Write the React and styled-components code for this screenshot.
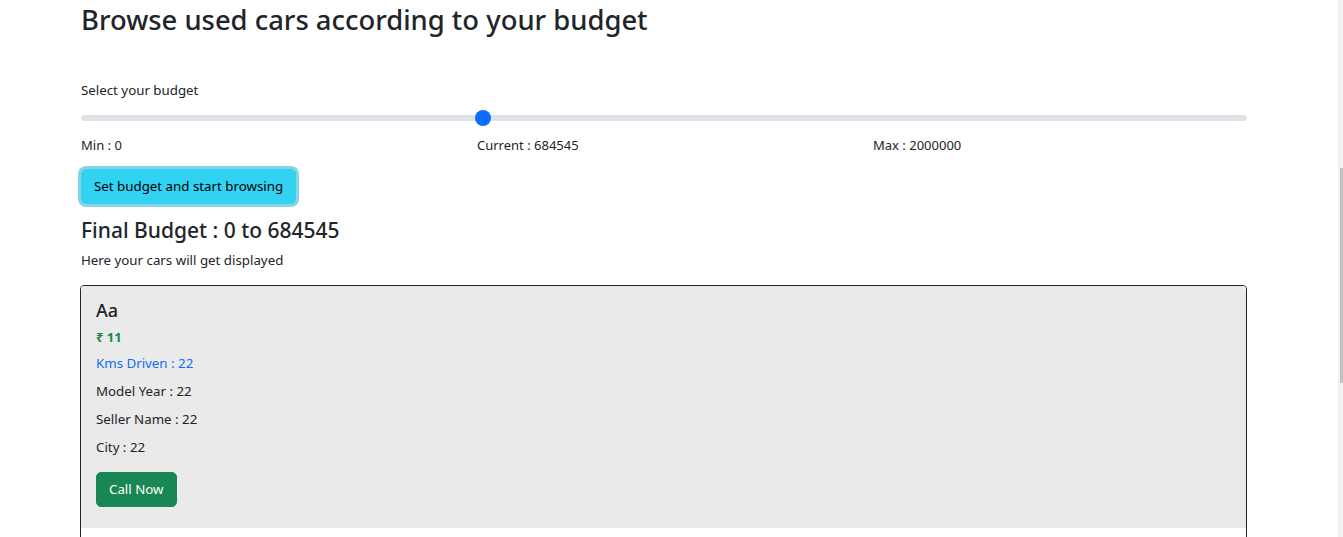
import React, { useState } from 'react';
import styled, { createGlobalStyle } from 'styled-components';

const GlobalStyle = createGlobalStyle`
  html, body {
    margin: 0;
    padding: 0;
    overflow: hidden;
    background: #fff;
  }
  body {
    font-family: "Noto Sans", "Open Sans", Arial, sans-serif;
    color: #212529;
  }
`;

const Page = styled.div`
  width: 1166px;
  margin-left: 81px;
  display: flex;
  flex-direction: column;
`;

const Title = styled.h2`
  margin: 2px 0 0;
  font-size: 27.4px;
  font-weight: 500;
  line-height: 36px;
`;

const Label = styled.div`
  margin-top: ${(p) => p.top || 0}px;
  font-size: 13.3px;
  line-height: 20px;
`;

const Range = styled.input`
  -webkit-appearance: none;
  appearance: none;
  width: 100%;
  height: 24px;
  margin: 6px 0 0;
  padding: 0;
  background: transparent;
  &:focus {
    outline: none;
  }
  &::-webkit-slider-runnable-track {
    height: 6px;
    background: #dee2e6;
    border-radius: 16px;
  }
  &::-webkit-slider-thumb {
    -webkit-appearance: none;
    width: 16px;
    height: 16px;
    margin-top: -5px;
    border-radius: 50%;
    background: #0d6efd;
    border: 0;
  }
`;

const Limits = styled.div`
  display: grid;
  grid-template-columns: repeat(3, 1fr);
  column-gap: 22px;
  margin-top: 5px;
  font-size: 13px;
  line-height: 20px;
`;

const Button = styled.button`
  align-self: flex-start;
  font-family: inherit;
  font-size: 13.3px;
  line-height: 21px;
  padding: 6px 12px;
  border-radius: 5px;
  border: 1px solid ${(p) => p.bg};
  background: ${(p) => p.bg};
  color: ${(p) => p.fg};
  box-shadow: ${(p) => (p.focused ? '0 0 0 3px rgba(11, 172, 204, 0.5)' : 'none')};
  margin-top: ${(p) => p.top || 0}px;
  cursor: pointer;
`;

const Subtitle = styled.h4`
  margin: 12px 0 0;
  font-size: 21px;
  font-weight: 500;
  line-height: 28px;
`;

const Card = styled.div`
  margin: 15px 0 0 -1px;
  border: 1px solid #212529;
  border-radius: 4px;
  overflow: hidden;
  background: #fff;
`;

const CardBody = styled.div`
  background: #eaeaea;
  padding: 12px 15px 21px 15px;
  display: flex;
  flex-direction: column;
`;

const CardTitle = styled.h5`
  margin: 0;
  font-size: 18px;
  font-weight: 500;
  line-height: 24px;
`;

const Price = styled.div`
  margin-top: 5px;
  font-size: 13px;
  font-weight: 700;
  line-height: 20px;
  color: #198754;
`;

const Info = styled.div`
  margin-top: ${(p) => p.top || 8}px;
  font-size: 13.3px;
  line-height: 20px;
  color: ${(p) => p.color || '#212529'};
`;

const CardFooter = styled.div`
  height: 120px;
`;

const ScrollTrack = styled.div`
  position: fixed;
  top: 0;
  right: 0;
  width: 5px;
  height: 100vh;
  background: #f1f1f1;
`;

const ScrollThumb = styled.div`
  position: absolute;
  top: 168px;
  left: 2px;
  width: 3px;
  height: 215px;
  background: #c1c1c1;
`;

export default function App() {
  const [budget, setBudget] = useState(684545);
  const car = { name: 'Aa', price: 11, kms: 22, year: 22, seller: 22, city: 22 };

  return (
    <>
      <GlobalStyle />
      <Page>
        <Title>Browse used cars according to your budget</Title>
        <Label top={42}>Select your budget</Label>
        <Range
          type="range"
          min="0"
          max="2000000"
          value={budget}
          onChange={(e) => setBudget(Number(e.target.value))}
        />
        <Limits>
          <div>Min : 0</div>
          <div>Current : {budget}</div>
          <div>Max : 2000000</div>
        </Limits>
        <Button bg="#31d2f2" fg="#000" focused top={14}>
          Set budget and start browsing
        </Button>
        <Subtitle>Final Budget : 0 to {budget}</Subtitle>
        <Label top={6}>Here your cars will get displayed</Label>
        <Card>
          <CardBody>
            <CardTitle>{car.name}</CardTitle>
            <Price>₹ {car.price}</Price>
            <Info color="#0d6efd" top={6}>Kms Driven : {car.kms}</Info>
            <Info>Model Year : {car.year}</Info>
            <Info>Seller Name : {car.seller}</Info>
            <Info>City : {car.city}</Info>
            <Button bg="#198754" fg="#fff" top={15}>Call Now</Button>
          </CardBody>
          <CardFooter />
        </Card>
      </Page>
      <ScrollTrack>
        <ScrollThumb />
      </ScrollTrack>
    </>
  );
}
